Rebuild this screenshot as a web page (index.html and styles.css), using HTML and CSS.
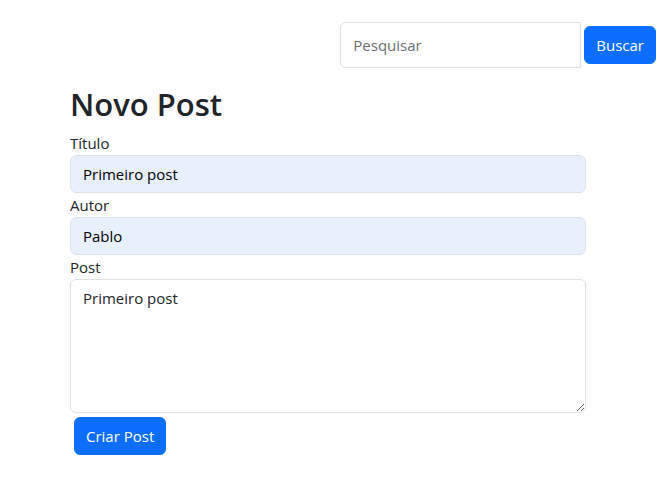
FILE: index.html
```html
<!DOCTYPE html>
<html lang="pt-BR">
<head>
<meta charset="utf-8">
<meta name="viewport" content="width=device-width, initial-scale=1">
<title>Novo Post</title>
<link rel="stylesheet" href="styles.css">
</head>
<body>
<header class="topbar">
  <form class="search" role="search">
    <input class="control search-input" type="search" placeholder="Pesquisar" aria-label="Pesquisar">
    <button class="btn" type="submit">Buscar</button>
  </form>
</header>
<main class="container">
  <h1 class="title">Novo Post</h1>
  <form class="post-form">
    <label for="titulo">Título</label>
    <input class="control filled" id="titulo" type="text" value="Primeiro post">
    <label for="autor">Autor</label>
    <input class="control filled" id="autor" type="text" value="Pablo">
    <label for="post">Post</label>
    <textarea class="control" id="post" rows="5">Primeiro post</textarea>
    <button class="btn submit" type="submit">Criar Post</button>
  </form>
</main>
</body>
</html>
```

FILE: styles.css
```css
*,
*::before,
*::after {
  box-sizing: border-box;
}

body {
  margin: 0;
  background: #fff;
  color: #212529;
  font-family: "Segoe UI", "Open Sans", "Noto Sans", sans-serif;
  font-size: 15px;
  line-height: 24px;
}

.topbar {
  display: flex;
  justify-content: flex-end;
  padding: 22px 4px 0;
}

.search {
  display: flex;
  align-items: center;
  gap: 3px;
}

.control {
  display: block;
  width: 100%;
  margin: 0;
  padding: 6px 12px;
  border: 1px solid #dee2e6;
  border-radius: 6px;
  background: #fff;
  color: #212529;
  font: inherit;
  appearance: none;
}

.control::placeholder {
  color: #6a6e72;
  opacity: 1;
}

.search-input {
  width: 241px;
  height: 46px;
  border-radius: 6px 0 0 6px;
}

.filled {
  height: 38px;
  background: #e8f0fe;
  color: #000;
}

.btn {
  padding: 6px 11px;
  border: 1px solid #0d6efd;
  border-radius: 6px;
  background: #0d6efd;
  color: #fff;
  font: inherit;
  cursor: pointer;
}

.container {
  padding: 17px 74px 0 70px;
}

.title {
  margin: 0 0 8px;
  font-size: 31px;
  font-weight: 600;
  line-height: 38px;
}

.post-form {
  display: flex;
  flex-direction: column;
}

textarea.control {
  min-height: 134px;
  resize: vertical;
}

.submit {
  align-self: flex-start;
  margin: 4px;
}
```
